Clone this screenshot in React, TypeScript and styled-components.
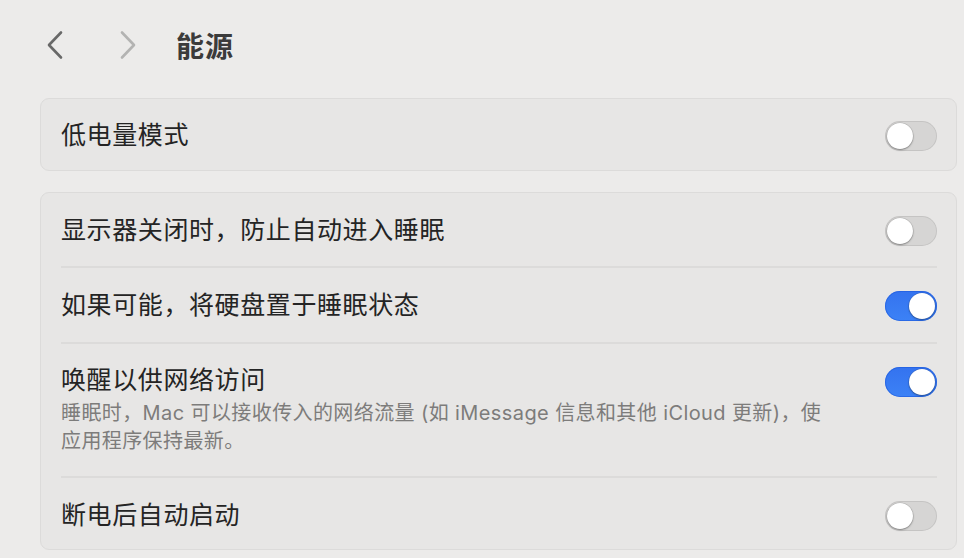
import React, { useState } from 'react';
import { styled, createGlobalStyle } from 'styled-components';

const GlobalStyle = createGlobalStyle`
  html, body {
    margin: 0;
    padding: 0;
    background: #ecebea;
  }
  body {
    font-family: Inter, "Noto Sans CJK SC", sans-serif;
    color: #242424;
  }
`;

interface Setting {
  id: string;
  label: string;
  detail?: string;
  on: boolean;
}

const groups: Setting[][] = [
  [{ id: 'low', label: '低电量模式', on: false }],
  [
    { id: 'display', label: '显示器关闭时，防止自动进入睡眠', on: false },
    { id: 'disk', label: '如果可能，将硬盘置于睡眠状态', on: true },
    {
      id: 'wake',
      label: '唤醒以供网络访问',
      detail: '睡眠时，Mac 可以接收传入的网络流量 (如 iMessage 信息和其他 iCloud 更新)，使应用程序保持最新。',
      on: true,
    },
    { id: 'power', label: '断电后自动启动', on: false },
  ],
];

const Switch = ({ on, onToggle }: { on: boolean; onToggle: () => void }) => (
  <Track $on={on} onClick={onToggle}>
    <Knob $on={on} />
  </Track>
);

const App = () => {
  const [values, setValues] = useState<Record<string, boolean>>(() =>
    Object.fromEntries(groups.flat().map((s) => [s.id, s.on]))
  );

  const toggle = (id: string) => setValues((v) => ({ ...v, [id]: !v[id] }));

  return (
    <Page>
      <GlobalStyle />
      <Header>
        <NavButton $muted={false}>
          <svg width="18" height="30" viewBox="0 0 18 30">
            <polyline points="15,2.5 3,15 15,27.5" fill="none" stroke="currentColor" strokeWidth="2.6" strokeLinecap="round" strokeLinejoin="round" />
          </svg>
        </NavButton>
        <NavButton $muted>
          <svg width="18" height="30" viewBox="0 0 18 30">
            <polyline points="3,2.5 15,15 3,27.5" fill="none" stroke="currentColor" strokeWidth="2.6" strokeLinecap="round" strokeLinejoin="round" />
          </svg>
        </NavButton>
        <Title>能源</Title>
      </Header>
      {groups.map((group, gi) => (
        <Card key={gi} $first={gi === 0}>
          {group.map((s, i) => (
            <Row
              key={s.id}
              $divider={i > 0}
              $tall={!!s.detail}
              $height={gi === 0 ? 71 : i === 0 ? 73 : i === group.length - 1 ? 68 : 74}
            >
              <TextBlock>
                <Label>{s.label}</Label>
                {s.detail && <Detail>{s.detail}</Detail>}
              </TextBlock>
              <Switch on={values[s.id]} onToggle={() => toggle(s.id)} />
            </Row>
          ))}
        </Card>
      ))}
    </Page>
  );
};

export default App;

const Page = styled.div`
  padding: 0 7px 20px 40px;
  width: 964px;
  box-sizing: border-box;
`;

const Header = styled.div`
  height: 90px;
  display: flex;
  align-items: center;
  padding-left: 6px;
`;

const NavButton = styled.div<{ $muted: boolean }>`
  display: flex;
  align-items: center;
  justify-content: center;
  width: 18px;
  height: 30px;
  margin-right: 55px;
  color: ${(p) => (p.$muted ? '#b3b3b2' : '#686868')};
  &:nth-child(2) {
    margin-right: 39px;
  }
`;

const Title = styled.h1`
  margin: 0;
  font-size: 28px;
  font-weight: 700;
  color: #3b3b3b;
  letter-spacing: 1px;
`;

const Card = styled.div<{ $first: boolean }>`
  margin-top: ${(p) => (p.$first ? '8px' : '21px')};
  background: #e7e6e5;
  border: 1px solid #dcdbda;
  border-radius: 9px;
`;

const Row = styled.div<{ $divider: boolean; $tall: boolean; $height: number }>`
  margin: 0 19px 0 20px;
  min-height: ${(p) => p.$height}px;
  display: flex;
  align-items: ${(p) => (p.$tall ? 'flex-start' : 'center')};
  justify-content: space-between;
  box-sizing: content-box;
  padding: ${(p) => (p.$tall ? '21px 0' : '0')};
  border-top: ${(p) => (p.$divider ? '2px solid #dcdbda' : 'none')};
  &:last-child:not(:first-child) {
    padding-top: 3px;
  }
`;

const TextBlock = styled.div`
  display: flex;
  flex-direction: column;
`;

const Label = styled.div`
  font-size: 25px;
  line-height: 30px;
  color: #242424;
  letter-spacing: 0.6px;
`;

const Detail = styled.div`
  margin-top: 4px;
  max-width: 770px;
  font-size: 20px;
  line-height: 28px;
  color: #7d7c7b;
  letter-spacing: 0.4px;
`;

const Track = styled.div<{ $on: boolean }>`
  position: relative;
  flex-shrink: 0;
  width: 52px;
  height: 30px;
  margin-top: 2px;
  border-radius: 15px;
  box-sizing: border-box;
  cursor: pointer;
  background: ${(p) => (p.$on ? 'linear-gradient(180deg, #3473ef, #3c82f6)' : '#d6d5d4')};
  box-shadow: inset 0 0 0 1px ${(p) => (p.$on ? 'rgba(30, 90, 220, 0.6)' : 'rgba(0, 0, 0, 0.08)')};
`;

const Knob = styled.div<{ $on: boolean }>`
  position: absolute;
  top: 2px;
  left: ${(p) => (p.$on ? '24px' : '2px')};
  width: 26px;
  height: 26px;
  border-radius: 50%;
  background: #ffffff;
  box-shadow: 0 1px 2px rgba(0, 0, 0, 0.35), 0 0 0 0.5px rgba(0, 0, 0, 0.15);
`;
